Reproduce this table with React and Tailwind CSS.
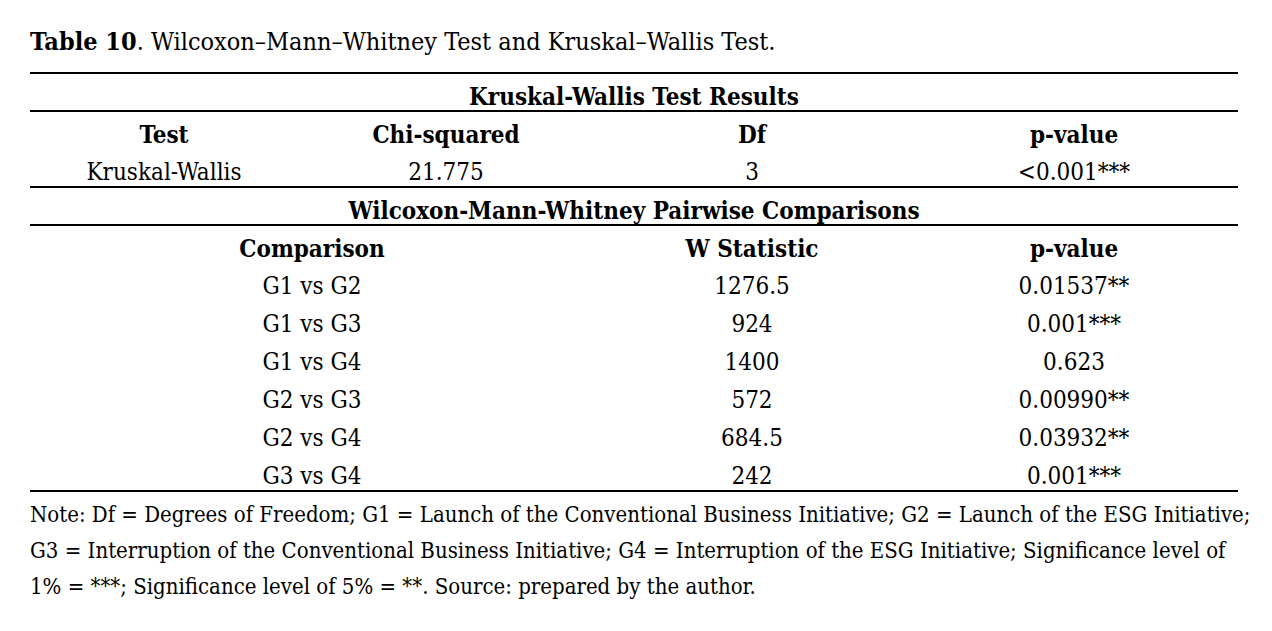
import React from 'react';

const kruskal = { test: 'Kruskal-Wallis', chi: '21.775', df: '3', p: '<0.001***' };

const pairs = [
  ['G1 vs G2', '1276.5', '0.01537**'],
  ['G1 vs G3', '924', '0.001***'],
  ['G1 vs G4', '1400', '0.623'],
  ['G2 vs G3', '572', '0.00990**'],
  ['G2 vs G4', '684.5', '0.03932**'],
  ['G3 vs G4', '242', '0.001***'],
];

export default function App() {
  return (
    <div className="min-h-screen bg-white text-black [font-family:'DejaVu_Serif_Condensed','DejaVu_Serif',serif] pl-[30px] pt-[26px]">
      {/* caption */}
      <p className="h-[32px] leading-[32px] mb-[14px] text-[25px] whitespace-nowrap">
        <span className="font-bold">Table 10</span>. Wilcoxon–Mann–Whitney Test and Kruskal–Wallis Test.
      </p>

      <table className="w-[1208px] table-fixed border-collapse text-center text-[24px]">
        <colgroup>
          <col className="w-[268px]" />
          <col className="w-[296px]" />
          <col className="w-[316px]" />
          <col className="w-[328px]" />
        </colgroup>
        <tbody className="[&_td]:h-[38px] [&_td]:p-0 [&_td]:pt-[10px] [&_td]:leading-[26px] [&_td]:align-top [&_th]:h-[38px] [&_th]:p-0 [&_th]:pt-[10px] [&_th]:leading-[26px] [&_th]:align-top">
          {/* ───── Kruskal-Wallis ───── */}
          <tr className="border-t-2 border-b-2 border-black">
            <th colSpan={4} className="font-bold">Kruskal-Wallis Test Results</th>
          </tr>
          <tr>
            <th className="font-bold">Test</th>
            <th className="font-bold">Chi-squared</th>
            <th className="font-bold">Df</th>
            <th className="font-bold">p-value</th>
          </tr>
          <tr className="border-b-2 border-black">
            <td>{kruskal.test}</td>
            <td>{kruskal.chi}</td>
            <td>{kruskal.df}</td>
            <td>{kruskal.p}</td>
          </tr>

          {/* ───── Wilcoxon pairwise ───── */}
          <tr className="border-b-2 border-black">
            <th colSpan={4} className="font-bold">Wilcoxon-Mann-Whitney Pairwise Comparisons</th>
          </tr>
          <tr>
            <th colSpan={2} className="font-bold">Comparison</th>
            <th className="font-bold">W Statistic</th>
            <th className="font-bold">p-value</th>
          </tr>
          {pairs.map(([cmp, w, p], i) => (
            <tr key={cmp} className={i === pairs.length - 1 ? 'border-b-2 border-black' : ''}>
              <td colSpan={2}>{cmp}</td>
              <td>{w}</td>
              <td>{p}</td>
            </tr>
          ))}
        </tbody>
      </table>

      {/* note */}
      <p className="leading-[36px] mt-[5px] text-[22px] whitespace-nowrap">
        Note: Df = Degrees of Freedom; G1 = Launch of the Conventional Business Initiative; G2 = Launch of the ESG Initiative;
        <br />
        G3 = Interruption of the Conventional Business Initiative; G4 = Interruption of the ESG Initiative; Significance level of
        <br />
        1% = ***; Significance level of 5% = **. Source: prepared by the author.
      </p>
    </div>
  );
}
